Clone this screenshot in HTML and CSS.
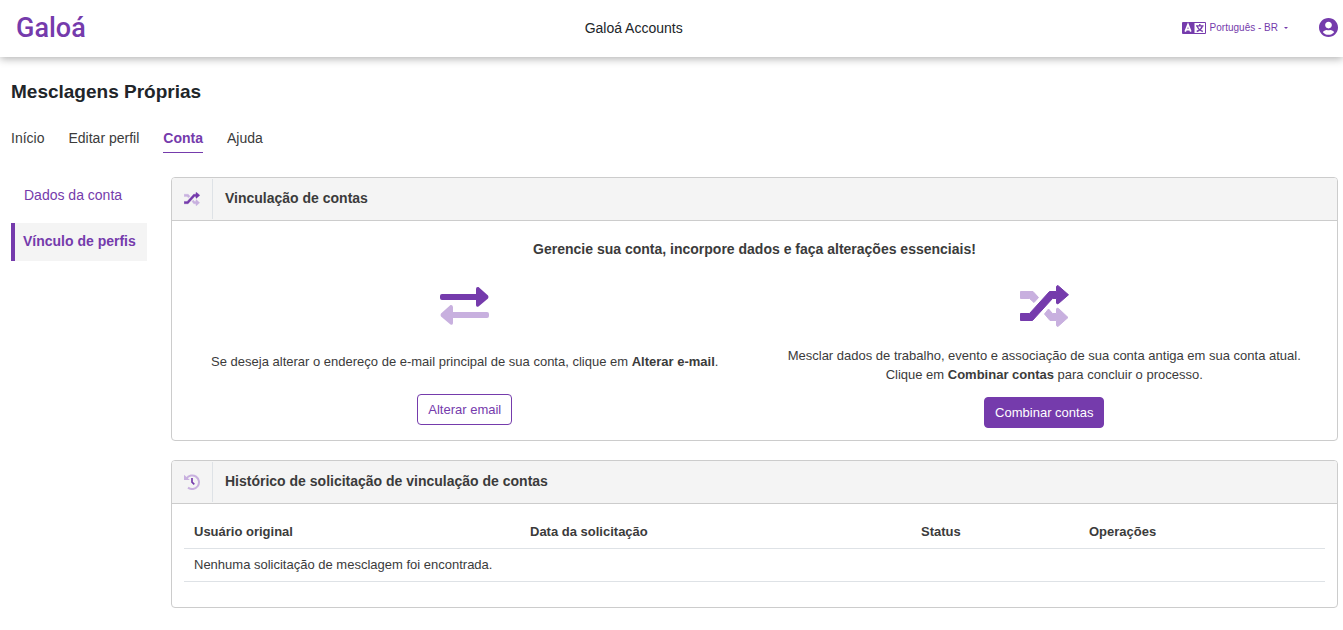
FILE: index.html
```
<!DOCTYPE html>
<html lang="pt-BR">
<head>
    <meta charset="UTF-8">
    <meta name="viewport" content="width=device-width, initial-scale=1.0">
    <title>Galoá Accounts</title>
    <link rel="stylesheet" href="styles.css">
</head>
<body>
    <header class="topbar">
        <a href="#" class="logo">Galoá</a>
        <span class="app-name">Galoá Accounts</span>
        <div class="topbar-actions">
            <button type="button" class="lang-btn">
                <svg class="lang-icon" viewBox="0 0 24 12" aria-hidden="true">
                    <rect width="24" height="12" rx="1" fill="#753bac"/>
                    <rect x="12.5" y="1" width="10.5" height="10" fill="#fff"/>
                    <path d="M3.2 9.6L6 2.6L8.8 9.6M4.2 7.6H7.8" fill="none" stroke="#fff" stroke-width="1.7"/>
                    <path d="M17.8 2V3.6M14 3.9H21.6M15.3 4.4Q16.5 8 20.8 9.5M20.3 4.4Q19 8 14.7 9.5" fill="none" stroke="#753bac" stroke-width="1.4"/>
                </svg>
                Português - BR
                <span class="caret"></span>
            </button>
            <button type="button" class="user-btn" aria-label="Perfil">
                <svg viewBox="0 8 496 496" aria-hidden="true">
                    <path fill="#753bac" d="M248 8C111 8 0 119 0 256s111 248 248 248 248-111 248-248S385 8 248 8zm0 96c48.600 0 88 39.400 88 88s-39.400 88-88 88-88-39.400-88-88 39.400-88 88-88zm0 344c-58.700 0-111.300-26.600-146.500-68.200 18.800-35.400 55.600-59.800 98.500-59.800 2.400 0 4.800.4 7.100 1.100 13 4.200 26.600 6.900 40.900 6.900 14.300 0 28-2.700 40.900-6.900 2.300-.7 4.700-1.100 7.100-1.100 42.900 0 79.700 24.400 98.500 59.800C359.300 421.400 306.700 448 248 448z"/>
                </svg>
            </button>
        </div>
    </header>

    <div class="page">
        <h1>Mesclagens Próprias</h1>
        <nav class="tabs">
            <a href="#">Início</a>
            <a href="#">Editar perfil</a>
            <a href="#" class="active">Conta</a>
            <a href="#">Ajuda</a>
        </nav>

        <div class="content">
            <nav class="sidebar">
                <a href="#">Dados da conta</a>
                <a href="#" class="active">Vínculo de perfis</a>
            </nav>

            <main class="main">
                <section class="card">
                    <div class="card-header">
                        <span class="card-icon">
                            <svg width="16" height="14" viewBox="0 0 49 42" aria-hidden="true">
                                <g fill="#c8b0df" stroke="#c8b0df" stroke-linejoin="round">
                                    <path d="M.5 6.500H13L18.500 12.500L14 17.500L9.500 13.500H.5zM24.500 29L28.500 24L32.500 28.500H36.500V24Q37 22.500 38.500 23.500L48 32.500L38.500 41Q37 42 36.500 40.500V35.500H30z"/>
                                </g>
                                <path fill="#753bac" stroke="#753bac" stroke-linejoin="round" d="M.5 28.500H9.500L29.500 6.500H36.500V1.500Q37 0 38.500 1L48.500 9.800L38.500 18.500Q37 19.500 36.500 18V13.500H32.500L12.500 35.500H.5z"/>
                            </svg>
                        </span>
                        <h2>Vinculação de contas</h2>
                    </div>
                    <div class="card-body">
                        <p class="lead">Gerencie sua conta, incorpore dados e faça alterações essenciais!</p>
                        <div class="options">
                            <div class="option">
                                <svg width="49" height="48" viewBox="0 0 49 48" aria-hidden="true">
                                    <path fill="#753bac" d="M2 12H36V7Q36 4.500 38.500 5L48 13.500Q49 15 48 16.500L38.500 24.500Q36 25.500 36 23V18H2Q0 18 0 16V14Q0 12 2 12z"/>
                                    <path fill="#c8b0df" d="M47 30H13V25Q12.500 22.500 10.500 23L1 31.500Q0 33 1 34.500L10.500 42.500Q13 43.500 13 41V36H47Q49 36 49 34V32Q49 30 47 30z"/>
                                </svg>
                                <p>Se deseja alterar o endereço de e-mail principal de sua conta, clique em <strong>Alterar e-mail</strong>.</p>
                                <button type="button" class="btn btn-outline">Alterar email</button>
                            </div>
                            <div class="option option-merge">
                                <svg width="49" height="48" viewBox="0 -3 49 48" aria-hidden="true">
                                    <g fill="#c8b0df" stroke="#c8b0df" stroke-linejoin="round">
                                        <path d="M.5 6.500H13L18.500 12.500L14 17.500L9.500 13.500H.5zM24.500 29L28.500 24L32.500 28.500H36.500V24Q37 22.500 38.500 23.500L48 32.500L38.500 41Q37 42 36.500 40.500V35.500H30z"/>
                                    </g>
                                    <path fill="#753bac" stroke="#753bac" stroke-linejoin="round" d="M.5 28.500H9.500L29.500 6.500H36.500V1.500Q37 0 38.500 1L48.500 9.800L38.500 18.500Q37 19.500 36.500 18V13.500H32.500L12.500 35.500H.5z"/>
                                </svg>
                                <p>Mesclar dados de trabalho, evento e associação de sua conta antiga em sua conta atual.<br>Clique em <strong>Combinar contas</strong> para concluir o processo.</p>
                                <button type="button" class="btn btn-primary">Combinar contas</button>
                            </div>
                        </div>
                    </div>
                </section>

                <section class="card">
                    <div class="card-header">
                        <span class="card-icon">
                            <svg width="16" height="16" viewBox="0 0 16 16" aria-hidden="true">
                                <path d="M2.500 4.500A6.800 6.800 0 1 1 4 13.600" fill="none" stroke="#c8b0df" stroke-width="2"/>
                                <path d="M0 .8L5.800 6H.6Q0 6 0 5.400z" fill="#c8b0df"/>
                                <path d="M8 4V8.200L10.300 10.300" fill="none" stroke="#753bac" stroke-width="1.700"/>
                            </svg>
                        </span>
                        <h2>Histórico de solicitação de vinculação de contas</h2>
                    </div>
                    <div class="table-wrap">
                        <table>
                            <thead>
                                <tr>
                                    <th class="col-user">Usuário original</th>
                                    <th class="col-date">Data da solicitação</th>
                                    <th class="col-status">Status</th>
                                    <th>Operações</th>
                                </tr>
                            </thead>
                            <tbody>
                                <tr>
                                    <td colspan="4">Nenhuma solicitação de mesclagem foi encontrada.</td>
                                </tr>
                            </tbody>
                        </table>
                    </div>
                </section>
            </main>
        </div>
    </div>
</body>
</html>
```
FILE: styles.css
```
* {
    margin: 0;
    padding: 0;
    box-sizing: border-box;
}

body {
    font-family: Arial, "Liberation Sans", sans-serif;
    font-size: 14px;
    color: #3b3b3b;
    background: #fff;
}

a {
    color: inherit;
    text-decoration: none;
}

button {
    font-family: inherit;
    cursor: pointer;
}

.topbar {
    display: flex;
    justify-content: space-between;
    align-items: center;
    height: 57px;
    padding: 0 5px 2px 16px;
    box-shadow: 0 2px 8px rgba(0, 0, 0, 0.3);
}

.logo {
    font-family: Roboto, sans-serif;
    font-size: 27px;
    font-weight: 500;
    color: #753bac;
}

.app-name {
    color: #212529;
}

.topbar-actions {
    display: flex;
    justify-content: flex-end;
    align-items: center;
    gap: 31px;
}

.lang-btn,
.user-btn {
    display: flex;
    align-items: center;
    border: none;
    background: none;
    color: #753bac;
}

.lang-btn {
    gap: 4px;
    font-size: 10px;
}

.lang-icon {
    width: 24px;
    height: 12px;
}

.caret {
    margin-left: 2px;
    border: 2px solid transparent;
    border-top-color: #753bac;
    border-bottom: none;
}

.user-btn svg {
    width: 19px;
    height: 19px;
}

.page {
    padding: 23px 5px 23px 11px;
}

h1 {
    font-size: 19px;
    line-height: 24px;
    color: #212529;
}

.tabs {
    display: flex;
    gap: 24px;
    margin-top: 24px;
}

.tabs a {
    padding-bottom: 4px;
    line-height: 20px;
    border-bottom: 1px solid transparent;
}

.tabs .active {
    color: #753bac;
    font-weight: bold;
    border-color: #753bac;
}

.content {
    display: flex;
    gap: 24px;
    margin-top: 24px;
}

.sidebar {
    flex: 0 0 136px;
    display: flex;
    flex-direction: column;
    gap: 8px;
    color: #753bac;
}

.sidebar a {
    padding: 0 13px 2px;
    line-height: 36px;
    white-space: nowrap;
}

.sidebar .active {
    padding: 0 8px 2px;
    font-weight: bold;
    background: #f4f4f4;
    border-left: 4px solid #753bac;
}

.main {
    flex: 1;
    display: flex;
    flex-direction: column;
    gap: 19px;
}

.card {
    border: 1px solid #ccc;
    border-radius: 4px;
    overflow: hidden;
}

.card-header {
    display: flex;
    align-items: center;
    height: 43px;
    background: #f4f4f4;
    border-bottom: 1px solid #ccc;
}

.card-icon {
    display: flex;
    align-items: center;
    justify-content: center;
    width: 41px;
    height: 40px;
    border-right: 1px solid #dee2e6;
}

h2 {
    padding-bottom: 2px;
    margin-left: 12px;
    font-size: 14px;
}

.card-body {
    padding: 18px 3px 12px;
}

.lead {
    font-weight: bold;
    line-height: 20px;
    text-align: center;
}

.options {
    display: grid;
    grid-template-columns: 1fr 1fr;
    margin-top: 23px;
    font-size: 13px;
}

.option {
    display: flex;
    flex-direction: column;
    align-items: center;
    text-align: center;
}

.option p {
    margin: 22px 0 23px;
    line-height: 19px;
}

.option-merge p {
    margin: 16px 0 13px;
}

.btn {
    height: 31px;
    padding: 0 10px;
    font-size: 13px;
    border: 1px solid #753bac;
    border-radius: 4px;
}

.btn-outline {
    color: #753bac;
    background: #fff;
}

.btn-primary {
    color: #fff;
    background: #753bac;
}

.table-wrap {
    padding: 11px 12px 25px;
}

table {
    width: 100%;
    border-collapse: collapse;
    font-size: 13px;
}

th,
td {
    height: 33px;
    padding: 0 10px;
    text-align: left;
    border-bottom: 1px solid #dee2e6;
}

.col-user {
    width: 336px;
}

.col-date {
    width: 391px;
}

.col-status {
    width: 168px;
}
```
